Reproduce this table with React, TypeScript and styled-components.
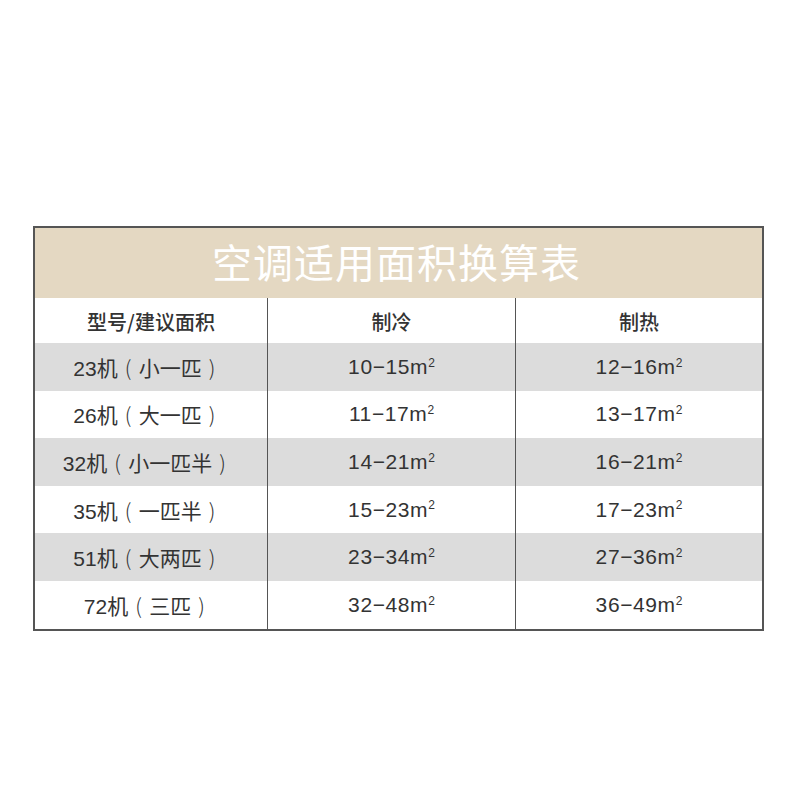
import React from 'react';
import styled, { createGlobalStyle } from 'styled-components';

const Global = createGlobalStyle`
  html, body {
    margin: 0;
    padding: 0;
    background: #ffffff;
  }
  body {
    font-family: "Liberation Sans", "Noto Sans CJK SC", sans-serif;
  }
`;

const Page = styled.div`
  width: 800px;
  height: 800px;
  padding: 226px 0 0 33px;
  box-sizing: border-box;
`;

const Table = styled.div`
  width: 731px;
  border: 2px solid #555555;
  box-sizing: border-box;
`;

const Title = styled.div`
  height: 70px;
  background: #e4d8c2;
  color: #ffffff;
  font-family: "Noto Sans CJK SC", sans-serif;
  font-size: 40px;
  line-height: 66px;
  text-align: center;
  letter-spacing: 1px;
  padding-right: 4px;
`;

const Row = styled.div<{ $shade?: boolean; $h: number }>`
  display: grid;
  grid-template-columns: 232px 248px 1fr;
  height: ${p => p.$h}px;
  background: ${p => (p.$shade ? '#dcdcdc' : '#ffffff')};
`;

const Cell = styled.div<{ $head?: boolean }>`
  display: flex;
  align-items: center;
  justify-content: center;
  color: #333333;
  font-size: ${p => (p.$head ? '20px' : '21px')};
  letter-spacing: ${p => (p.$head ? '0' : '0.6px')};
  & + & {
    border-left: 1.5px solid #555555;
  }
`;

const HeadText = styled.span`
  font-family: "Noto Sans CJK SC", sans-serif;
  font-weight: 500;
  padding-top: 2px;
`;

const Label = styled.span`
  font-family: "Liberation Sans", "Noto Sans CJK SC", sans-serif;
  letter-spacing: 0;
  margin-right: 6px;
`;

const Paren = styled.span`
  display: inline-block;
  width: 1em;
  text-align: center;
  font-family: "Noto Sans CJK SC", sans-serif;
  font-weight: 300;
`;

const Sup = styled.span`
  font-size: 12px;
  position: relative;
  top: -0.6em;
  letter-spacing: 0;
`;

const rows = [
  ['23', '小一匹', '10−15', '12−16'],
  ['26', '大一匹', '11−17', '13−17'],
  ['32', '小一匹半', '14−21', '16−21'],
  ['35', '一匹半', '15−23', '17−23'],
  ['51', '大两匹', '23−34', '27−36'],
  ['72', '三匹', '32−48', '36−49'],
];

const Area = ({ v }: { v: string }) => (
  <span>
    {v}m<Sup>2</Sup>
  </span>
);

export default function App() {
  return (
    <>
      <Global />
      <Page>
        <Table>
          <Title>空调适用面积换算表</Title>
          <Row $h={45}>
            <Cell $head>
              <HeadText>型号/建议面积</HeadText>
            </Cell>
            <Cell $head>
              <HeadText>制冷</HeadText>
            </Cell>
            <Cell $head>
              <HeadText>制热</HeadText>
            </Cell>
          </Row>
          {rows.map((r, i) => (
            <Row key={r[0]} $h={47.6} $shade={i % 2 === 0}>
              <Cell>
                <Label>
                  {r[0]}机<Paren>(</Paren>
                  {r[1]}
                  <Paren>)</Paren>
                </Label>
              </Cell>
              <Cell>
                <Area v={r[2]} />
              </Cell>
              <Cell>
                <Area v={r[3]} />
              </Cell>
            </Row>
          ))}
        </Table>
      </Page>
    </>
  );
}
